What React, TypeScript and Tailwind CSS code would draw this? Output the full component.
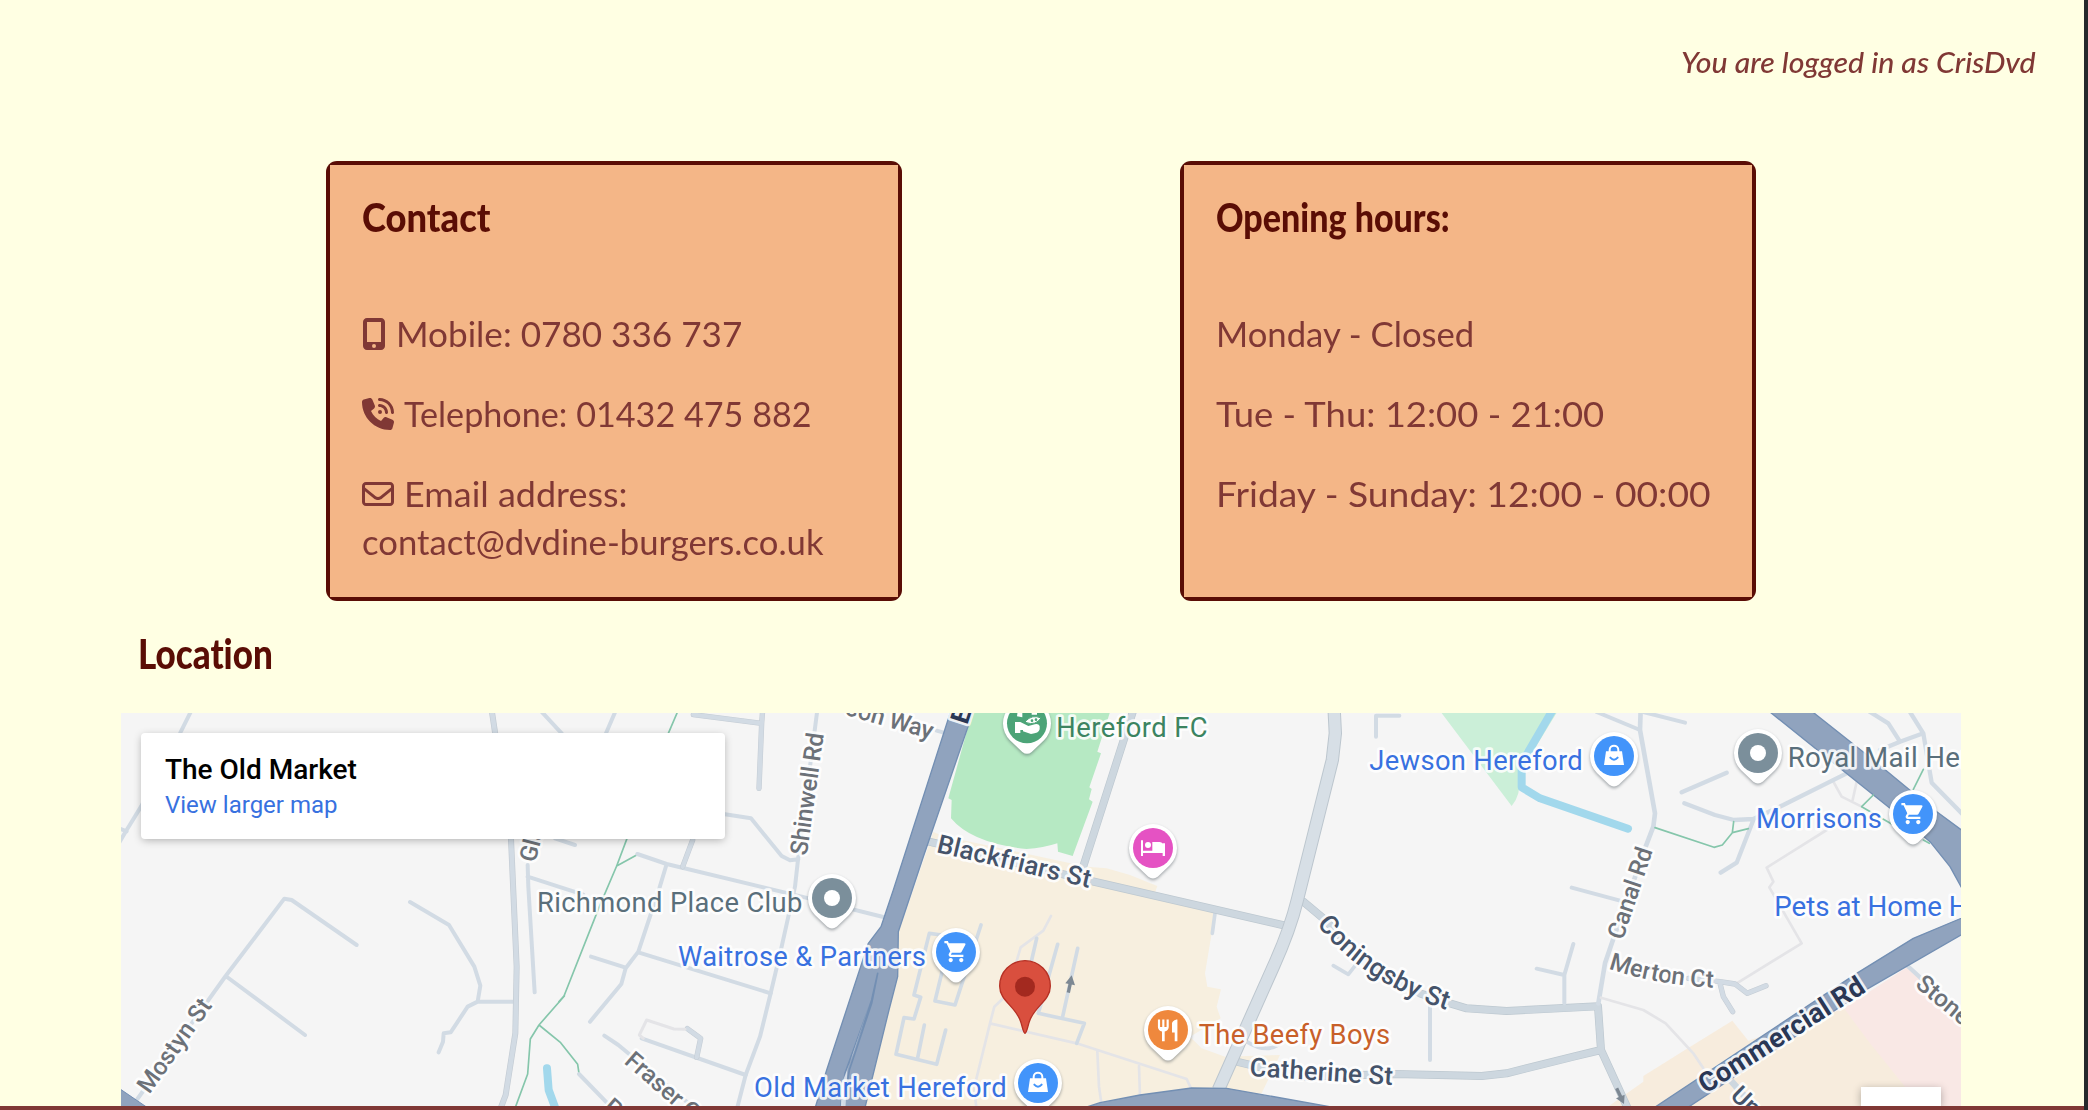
import { useLayoutEffect, useRef, useState, type ReactNode } from "react";
import { FaMobileScreenButton, FaPhoneVolume, FaRegEnvelope } from "react-icons/fa6";
import { MdRestaurant, MdShoppingCart } from "react-icons/md";

/** One line of text, stretched or narrowed to an exact width. */
function Fit({ width, className = "", children }: { width: number; className?: string; children: ReactNode }) {
  const ref = useRef<HTMLSpanElement>(null);
  const [scale, setScale] = useState(1);
  useLayoutEffect(() => {
    if (ref.current) setScale(width / ref.current.offsetWidth);
  }, [width]);
  return (
    <span
      ref={ref}
      className={`inline-block origin-left whitespace-nowrap ${className}`}
      style={{ transform: `scaleX(${scale})` }}
    >
      {children}
    </span>
  );
}

function Card({ title, titleWidth, children }: { title: string; titleWidth: number; children: ReactNode }) {
  return (
    <section className="h-[440px] w-[576px] rounded-[11px] bg-[#5a0d05] p-1">
      <div className="flex h-full flex-col bg-[#f4b687] px-8 pt-7">
        <h2 className="mb-[69px] h-12 text-[40px] leading-[48px] font-black text-[#5a0d05]">
          <Fit width={titleWidth}>{title}</Fit>
        </h2>
        <div className="flex flex-col gap-8 text-[34px] leading-[48px] text-[#803835]">{children}</div>
      </div>
    </section>
  );
}

/* ---------- map ---------- */

type LabelProps = {
  x: number;
  y: number;
  len?: number;
  size?: number;
  weight?: number;
  fill: string;
  rotate?: number;
  children: string;
};

function Label({ x, y, len, size = 82, weight = 400, fill, rotate = 0, children }: LabelProps) {
  return (
    <text
      transform={`translate(${x} ${y}) rotate(${rotate})`}
      fontSize={size}
      fontWeight={weight}
      fill={fill}
      textLength={len}
      stroke="#ffffff"
      strokeOpacity={0.85}
      strokeWidth={16}
      strokeLinejoin="round"
      paintOrder="stroke"
    >
      {children}
    </text>
  );
}

type CurvedLabelProps = { id: string; d: string; len: number; fill: string; size: number; children: string };

function CurvedLabel({ id, d, len, fill, size, children }: CurvedLabelProps) {
  return (
    <>
      <path id={id} d={d} fill="none" stroke="none" />
      <text
        fontSize={size}
        fontWeight={500}
        fill={fill}
        stroke="#ffffff"
        strokeOpacity={0.85}
        strokeWidth={16}
        strokeLinejoin="round"
        paintOrder="stroke"
        textLength={len}
      >
        <textPath href={`#${id}`} textLength={len}>
          {children}
        </textPath>
      </text>
    </>
  );
}

type PinKind = "dot" | "cart" | "bag" | "bed" | "food" | "stadium";

const pinColor: Record<PinKind, string> = {
  dot: "#7b8f9b",
  cart: "#4294fa",
  bag: "#4294fa",
  bed: "#e552c3",
  food: "#ef883d",
  stadium: "#4ca478",
};

function Pin({ x, y, kind }: { x: number; y: number; kind: PinKind }) {
  return (
    <g transform={`translate(${x} ${y})`}>
      <path
        d="M-51 51 L-14 86 Q0 97 14 86 L51 51 A72 72 0 1 0 -51 51Z"
        fill="#fff"
        className="drop-shadow-[0_5px_4px_rgba(60,70,80,0.45)]"
      />
      <circle r={60} fill={pinColor[kind]} />
      {kind === "dot" && <circle r={24} fill="#fff" />}
      {kind === "cart" && <MdShoppingCart x={-38} y={-39} size={76} color="#fff" />}
      {kind === "food" && <MdRestaurant x={-40} y={-38} size={78} color="#fff" />}
      {kind === "bag" && (
        <>
          <path d="M-24 -14H24L30 27H-30Z" fill="#fff" />
          <path d="M-13 -10V-18C-13 -35 13 -35 13 -18V-10" fill="none" stroke="#fff" strokeWidth={6} />
          <path d="M-11 5Q0 17 11 5" fill="none" stroke="#4294fa" strokeWidth={6} />
        </>
      )}
      {kind === "bed" && (
        <>
          <path d="M-36 -23H-30V8H29V-14H36V24H29V15H-30V24H-36Z" fill="#fff" />
          <circle cx={-15} cy={-9} r={9} fill="#fff" />
          <path d="M-2 -18H20Q32 -16 33 -4V9H-2Z" fill="#fff" />
        </>
      )}
      {kind === "stadium" && (
        <>
          <path d="M-36 -4H-20L4 8L18 4Q34 -2 38 8V18Q36 30 12 32L-12 24V20H-20V29H-36Z" fill="#fff" />
          <path d="M-4 -7Q16 -28 42 -16Q26 8 -2 -2Z" fill="#fff" stroke="#4ca478" strokeWidth={3} />
          <circle cx={15} cy={-8} r={4} fill="#4ca478" />
          <circle cx={27} cy={-11} r={4} fill="#4ca478" />
          <path d="M-28 -36H-14V-18L-30 -21ZM14 -38H30V-26H14Z" fill="#fff" />
        </>
      )}
    </g>
  );
}

const MINOR = "#d2dbe4";
const OUT = "#c4ccd4";
const TRUNK = "#90a3be";
const TRUNK_EDGE = "#738fb3";
const PATH = "#85c6ab";
const WALK = "#e4e4e7";
const STREET = "#6c7178";
const MAIN = "#45536a";
const HIGHWAY = "#2a3755";
const SHOP = "#3871e0";
const PLACE = "#5a6f7b";

function MapDrawing() {
  const zone = (ox: number, oy: number) => `translate(${ox} ${oy}) scale(0.33333)`;
  return (
    <svg
      viewBox="121 713 1840 393"
      className="block h-[393px] w-[1840px]"
      fontFamily="Roboto, sans-serif"
      fill="none"
      strokeLinecap="round"
      strokeLinejoin="round"
    >
      {/* land use */}
      <g transform={zone(900, 700)}>
        <path
          fill="#f7efdf"
          d="M100 396L130 408L560 500L620 505L690 525L772 558L765 578L945 640L915 820L922 860L963 868L950 920L962 955L870 1010L905 1045L975 1070L1140 1065L1085 1180L870 1200L600 1218L-110 1218L-33 930L-7 830L-5 700Z"
        />
        <path
          fill="#b6e9c3"
          d="M218 30L145 295L155 300L153 355Q215 430 380 447Q430 444 472 430L474 455L518 468L578 305L567 298L575 267L568 262L603 160L592 155L632 30Z"
        />
      </g>
      <g transform={zone(1300, 700)}>
        <path fill="#cbefd8" d="M418 30L635 318Q650 300 655 280L665 210L775 30Z" />
        <path stroke="#a2d8ec" strokeWidth={24} d="M758 30L665 190V262L720 295L984 386" />
      </g>
      <g transform={zone(1640, 700)}>
        <path fill="#f7ecdd" d="M-110 1230L10 1145L10 1128L135 1050L277 962L325 1022L615 925L810 1160V1230Z" />
        <path fill="#f9e8e5" d="M803 800L840 830L970 985V1230H860L795 1160L690 1030L612 925Z" />
      </g>

      {/* western streets */}
      <g transform={zone(100, 620)} stroke={MINOR} strokeWidth={12}>
        <path d="M275 270L240 340L123 560L80 630L55 672M60 626L80 634" />
        <path d="M110 1440L377 1068L553 836L575 840L770 975M377 1068L615 1245" />
        <path d="M930 846L1047 915L1123 1040L1141 1097L1133 1145H1245M1133 1145L1103 1160L1052 1237L1031 1240L1029 1265L1016 1297" />
        <path d="M1283 735L1285 800L1304 1117M1283 770L1450 824M1320 270L1385 340M1365 655L1425 675" />
        <path stroke={OUT} strokeWidth={18} d="M1175 270L1187 350L1233 657L1250 1040L1246 1240L1217 1425L1198 1475" />
        <path stroke={MINOR} strokeWidth={14} d="M1175 270L1187 350L1233 657L1250 1040L1246 1240L1217 1425L1198 1475" />
        <path stroke="#a2d8ec" strokeWidth={24} d="M1341 1345L1346 1410L1370 1475" />
        <path stroke={PATH} strokeWidth={5} d="M1393 1128L1317 1215L1291 1257L1283 1362L1245 1465M1317 1215L1382 1268L1433 1333L1437 1360" />
        <path fill={TRUNK} stroke={TRUNK_EDGE} strokeWidth={3} d="M50 1400L160 1475L50 1490Z" />
      </g>
      <g transform={zone(560, 700)} stroke={MINOR} strokeWidth={12}>
        <path stroke={PATH} strokeWidth={5} d="M355 30L325 100L200 418L170 498L118 620L12 888L-3 905M170 498L230 465" />
        <path d="M168 30L138 100M495 343L573 355L665 468L690 481L715 478M772 30L750 200L715 470L705 560L665 740L632 880L600 1010L557 1125L530 1230" />
        <path d="M232 462L320 492L725 590L970 651M320 492L298 565L235 755L197 805L184 852L90 965M93 770L197 803M235 757L632 880" />
        <path d="M245 1015L557 1125M133 1007L175 1035L410 1230M57 1122L160 1228M1130 92L1160 100" />
        <g stroke={OUT} strokeWidth={16}>
          <path d="M400 44L605 70M608 30L605 70L597 265M398 420L368 500M410 1072L422 1015L382 986" />
        </g>
        <g strokeWidth={13}>
          <path d="M400 44L605 70M608 30L605 70L597 265M398 420L368 500M410 1072L422 1015L382 986" />
        </g>
        <path stroke={WALK} strokeWidth={9} d="M375 988L342 987L260 960L238 1005L250 1015" />
        <path stroke="#ccd7de" strokeWidth={22} d="M1100 425L1140 432" />
      </g>

      {/* centre */}
      <g transform={zone(900, 700)} stroke={MINOR} strokeWidth={11}>
        <path stroke={WALK} strokeWidth={8} d="M453 648L430 692L362 742L345 800L325 880L283 920L270 970L222 1165L230 1230M270 970L530 1030L860 1137L873 1165M592 1055L597 1160L605 1215M717 1098L720 1190" />
        <path d="M243 675L165 915L105 903L130 800M125 705L88 700L42 885L62 892L42 957L12 953L-12 1063L110 1093L137 990M73 975L52 1078" />
        <path d="M410 715L395 780M473 733L415 940M533 745L488 950M415 940L553 970L530 1030M945 640L937 700M1300 797L1345 823L1375 785M1040 1025Q1095 1060 1135 1035" />
        <path stroke="#bdc8d0" strokeWidth={24} d="M700 30L548 505M88 425L560 540L1160 678M1210 605L1270 655L1400 790L1560 880L1650 910L1700 925L1820 933L2094 919L2103 1050L2190 1240M2103 1050L2020 1070L1820 1120L1745 1128L1485 1122L1200 1130L1010 1085" />
        <path stroke="#cdd7df" strokeWidth={20} d="M700 30L548 505M88 425L560 540L1160 678M1210 605L1270 655L1400 790L1560 880L1650 910L1700 925L1820 933L2094 919L2103 1050L2190 1240M2103 1050L2020 1070L1820 1120L1745 1128L1485 1122L1200 1130L1010 1085" />
        <path stroke="#bcc6ce" strokeWidth={40} strokeLinecap="butt" d="M1302 20L1306 100L1297 180L1192 600Q1170 690 1120 800L955 1170" />
        <path stroke="#d7dfe6" strokeWidth={34} strokeLinecap="butt" d="M1302 20L1306 100L1297 180L1192 600Q1170 690 1120 800L955 1170" />
        <path fill={TRUNK} stroke={TRUNK_EDGE} strokeWidth={4} d="M560 1221L600 1208L720 1185L875 1164L980 1165L1300 1222Z" />
        <path stroke="#7d8893" strokeWidth={10} strokeLinecap="butt" d="M505 878L512 845" />
        <path fill="#7d8893" stroke="none" d="M515 826L525 856L496 850Z" />
      </g>

      {/* northern trunk road */}
      <g transform={zone(560, 700)}>
        <path
          fill={TRUNK}
          stroke={TRUNK_EDGE}
          strokeWidth={4}
          d="M1175 25L1000 570L963 680L925 730L800 1110L762 1235H912L987 930L1013 830L1015 695L1090 470L1243 25Z"
        />
        <path stroke={TRUNK_EDGE} strokeWidth={5} d="M953 820L935 900L855 1120L840 1235M953 820L935 910L868 1110L848 1235" />
        <path fill="#eef1f5" d="M934 895L880 1060L846 1150L842 1230L856 1230L862 1110Z" opacity={0.75} />
      </g>

      {/* eastern streets */}
      <g transform={zone(1300, 700)} stroke={MINOR} strokeWidth={12}>
        <path d="M228 110V47H298M890 36L1020 90M1030 36L1155 68M815 563L960 602M820 732L793 825V910M710 806L793 825M390 915V1080" />
        <path strokeWidth={14} d="M1022 30L1020 90L1065 340L1060 380L1037 440L937 725L915 790L895 910" />
        <path stroke={WALK} strokeWidth={8} d="M903 893L1030 930L1097 970L1180 1060L1210 1105" />
        <path stroke="#7d8893" strokeWidth={10} strokeLinecap="butt" d="M950 1165L964 1195" />
        <path fill="#7d8893" stroke="none" d="M948 1195L974 1184L972 1212Z" />
      </g>
      <g transform={zone(1640, 700)} stroke={MINOR} strokeWidth={13}>
        <path stroke={WALK} strokeWidth={8} d="M580 245L605 290L665 320M650 245L638 300M560 390L380 503L400 545L388 562L485 730L290 850" />
        <path d="M125 277L260 218M133 310L225 345L282 360L340 357L430 315L620 220M340 360L290 488L242 518" />
        <path d="M690 36L745 70L780 125M810 36L850 100L780 125L720 150M850 100L865 190L875 248L970 345" />
        <path fill={TRUNK} stroke={TRUNK_EDGE} strokeWidth={4} d="M380 28L750 325L870 425L930 500L985 600V405L870 320L700 180L508 28Z" />
        <path stroke={PATH} strokeWidth={5} d="M45 383L222 442L247 435L277 398L325 386M281 365L277 398M850 208L820 268M700 285L665 320L755 372M850 420L868 430" />
        <path stroke={OUT} strokeWidth={16} d="M145 835L240 845L285 852L322 880L378 857M240 850L250 890L278 935" />
        <path d="M145 835L240 845L285 852L322 880L378 857M240 850L250 890L278 935" />
        <path d="M803 798L860 850L980 980" />
        <path stroke="#cdd7df" strokeWidth={20} d="M262 1130L350 1230" />
        <path fill={TRUNK} stroke={TRUNK_EDGE} strokeWidth={4} d="M980 648L820 715L650 820L20 1238H120L680 868L980 695Z" />
      </g>

      {/* street names */}
      <g transform={zone(100, 620)}>
        <Label x={148} y={1424} rotate={-54.5} size={73} weight={500} len={328} fill={STREET}>Mostyn St</Label>
        <Label x={1306} y={730} rotate={-76} size={72} weight={500} fill={STREET}>Gla</Label>
      </g>
      <g transform={zone(560, 700)}>
        <Label x={740} y={468} rotate={-82} size={73} weight={500} len={370} fill={STREET}>Shinwell Rd</Label>
        <Label x={851} y={43} rotate={16} size={73} weight={500} len={272} fill={STREET}>oon Way</Label>
        <Label x={190} y={1088} rotate={41} size={73} weight={500} fill={STREET}>Fraser Ct</Label>
        <Label x={126} y={1228} rotate={41} size={73} weight={500} fill={STREET}>Pa</Label>
        <Label x={1222} y={76} rotate={-72} size={78} weight={700} fill={HIGHWAY}>E</Label>
      </g>
      <g transform={zone(900, 700)}>
        <Label x={107} y={456} rotate={13.2} size={78} weight={500} len={472} fill={MAIN}>Blackfriars St</Label>
        <Label x={1048} y={1128} rotate={3.6} size={78} weight={500} len={430} fill={MAIN}>Catherine St</Label>
      </g>
      <g transform={zone(1300, 700)}>
        <CurvedLabel id="coningsby" d="M50 672Q188 850 447 932" len={474} size={79} fill={MAIN}>Coningsby St</CurvedLabel>
        <Label x={968} y={722} rotate={-71.5} size={73} weight={500} len={285} fill={STREET}>Canal Rd</Label>
        <CurvedLabel id="merton" d="M925 806Q1080 858 1260 864" len={321} size={73} fill={STREET}>Merton Ct</CurvedLabel>
      </g>
      <g transform={zone(1640, 700)}>
        <Label x={197} y={1182} rotate={-32.5} size={82} weight={700} len={574} fill={HIGHWAY}>Commercial Rd</Label>
        <Label x={823} y={858} rotate={40} size={73} weight={500} fill={STREET}>Stone</Label>
        <Label x={268} y={1190} rotate={44} size={76} weight={500} fill={MAIN}>Un</Label>
      </g>

      {/* places */}
      <g transform={zone(560, 700)}>
        <Label x={-69} y={635} len={796} fill={PLACE}>Richmond Place Club</Label>
        <Label x={354} y={797} len={744} fill={SHOP}>Waitrose &amp; Partners</Label>
        <Label x={582} y={1190} len={758} fill={SHOP}>Old Market Hereford</Label>
        <Pin x={816} y={594} kind="dot" />
        <Pin x={1188} y={756} kind="cart" />
      </g>
      <g transform={zone(900, 700)}>
        <Label x={469} y={110} len={454} fill="#3c8461">Hereford FC</Label>
        <Label x={896} y={1031} len={574} fill="#c8602a">The Beefy Boys</Label>
        <Pin x={381} y={70} kind="stadium" />
        <Pin x={759} y={444} kind="bed" />
        <Pin x={804} y={990} kind="food" />
        <Pin x={414} y={1149} kind="bag" />
        <path
          fill="#d94f3e"
          stroke="#b53024"
          strokeWidth={4}
          d="M375 1000C369 1000 367 975 359 957C340 915 299 900 299 858A76 76 0 0 1 451 858C451 900 410 915 391 957C383 975 381 1000 375 1000Z"
        />
        <circle cx={375} cy={860} r={30} fill="#a3291f" />
      </g>
      <g transform={zone(1300, 700)}>
        <Label x={208} y={209} len={640} fill={SHOP}>Jewson Hereford</Label>
        <Pin x={942} y={168} kind="bag" />
      </g>
      <g transform={zone(1640, 700)}>
        <Label x={443} y={200} len={546} size={83} fill={PLACE}>Royal Mail Her</Label>
        <Label x={348} y={383} len={378} fill={SHOP}>Morrisons</Label>
        <Label x={403} y={647} size={83} fill={SHOP}>Pets at Home H</Label>
        <Pin x={354} y={159} kind="dot" />
        <Pin x={819} y={342} kind="cart" />
      </g>
    </svg>
  );
}

export default function App() {
  return (
    <div className="flex h-[1110px] w-[2088px] overflow-hidden bg-[#25292c] font-['Lato',sans-serif] [font-variant-ligatures:none]">
      <div className="flex w-[2084px] flex-col bg-[#ffffe3]">
        <header className="flex h-[161px] items-start pt-[42px] pl-[1681px]">
          <p className="text-[28px] leading-10 font-medium text-[#803835] italic">
            <Fit width={355}>You are logged in as CrisDvd</Fit>
          </p>
        </header>

        <div className="flex gap-[278px] pl-[326px]">
          <Card title="Contact" titleWidth={128}>
            <p className="flex items-center gap-2.5">
              <FaMobileScreenButton className="h-8 w-6" />
              <Fit width={346}>Mobile: 0780 336 737</Fit>
            </p>
            <p className="flex items-center gap-2.5">
              <FaPhoneVolume className="size-8" />
              <Fit width={408}>Telephone: 01432 475 882</Fit>
            </p>
            <div>
              <p className="flex items-center gap-2.5">
                <FaRegEnvelope className="size-8" />
                <Fit width={223}>Email address:</Fit>
              </p>
              <p className="h-12">
                <Fit width={462}>contact@dvdine-burgers.co.uk</Fit>
              </p>
            </div>
          </Card>
          <Card title="Opening hours:" titleWidth={234}>
            <p className="h-12">
              <Fit width={258}>Monday - Closed</Fit>
            </p>
            <p className="h-12">
              <Fit width={388}>Tue - Thu: 12:00 - 21:00</Fit>
            </p>
            <p className="h-12">
              <Fit width={495}>Friday - Sunday: 12:00 - 00:00</Fit>
            </p>
          </Card>
        </div>

        <h2 className="flex h-28 items-start pt-[29px] pl-[138px] text-[41px] leading-[48px] font-black text-[#5a0d05]">
          <Fit width={135}>Location</Fit>
        </h2>

        <div className="relative ml-[121px] h-[393px] w-[1840px] overflow-hidden bg-[#f5f5f5] font-['Roboto',sans-serif]">
          <MapDrawing />
          <div className="absolute top-5 left-5 h-[106px] w-[584px] rounded-[4px] bg-white px-6 pt-[21px] shadow-[0_2px_8px_-1px_rgba(0,0,0,0.3)]">
            <p className="h-8 text-[28px] leading-8 font-medium text-black">
              <Fit width={192}>The Old Market</Fit>
            </p>
            <p className="mt-[3px] h-8 text-[24px] leading-8 text-[#3871e0]">
              <Fit width={173}>View larger map</Fit>
            </p>
          </div>
          <div className="absolute right-5 bottom-0 h-[19px] w-20 bg-white shadow-[0_2px_8px_rgba(0,0,0,0.3)]" />
        </div>
        <div className="h-1 bg-[#803835]" />
      </div>
    </div>
  );
}
